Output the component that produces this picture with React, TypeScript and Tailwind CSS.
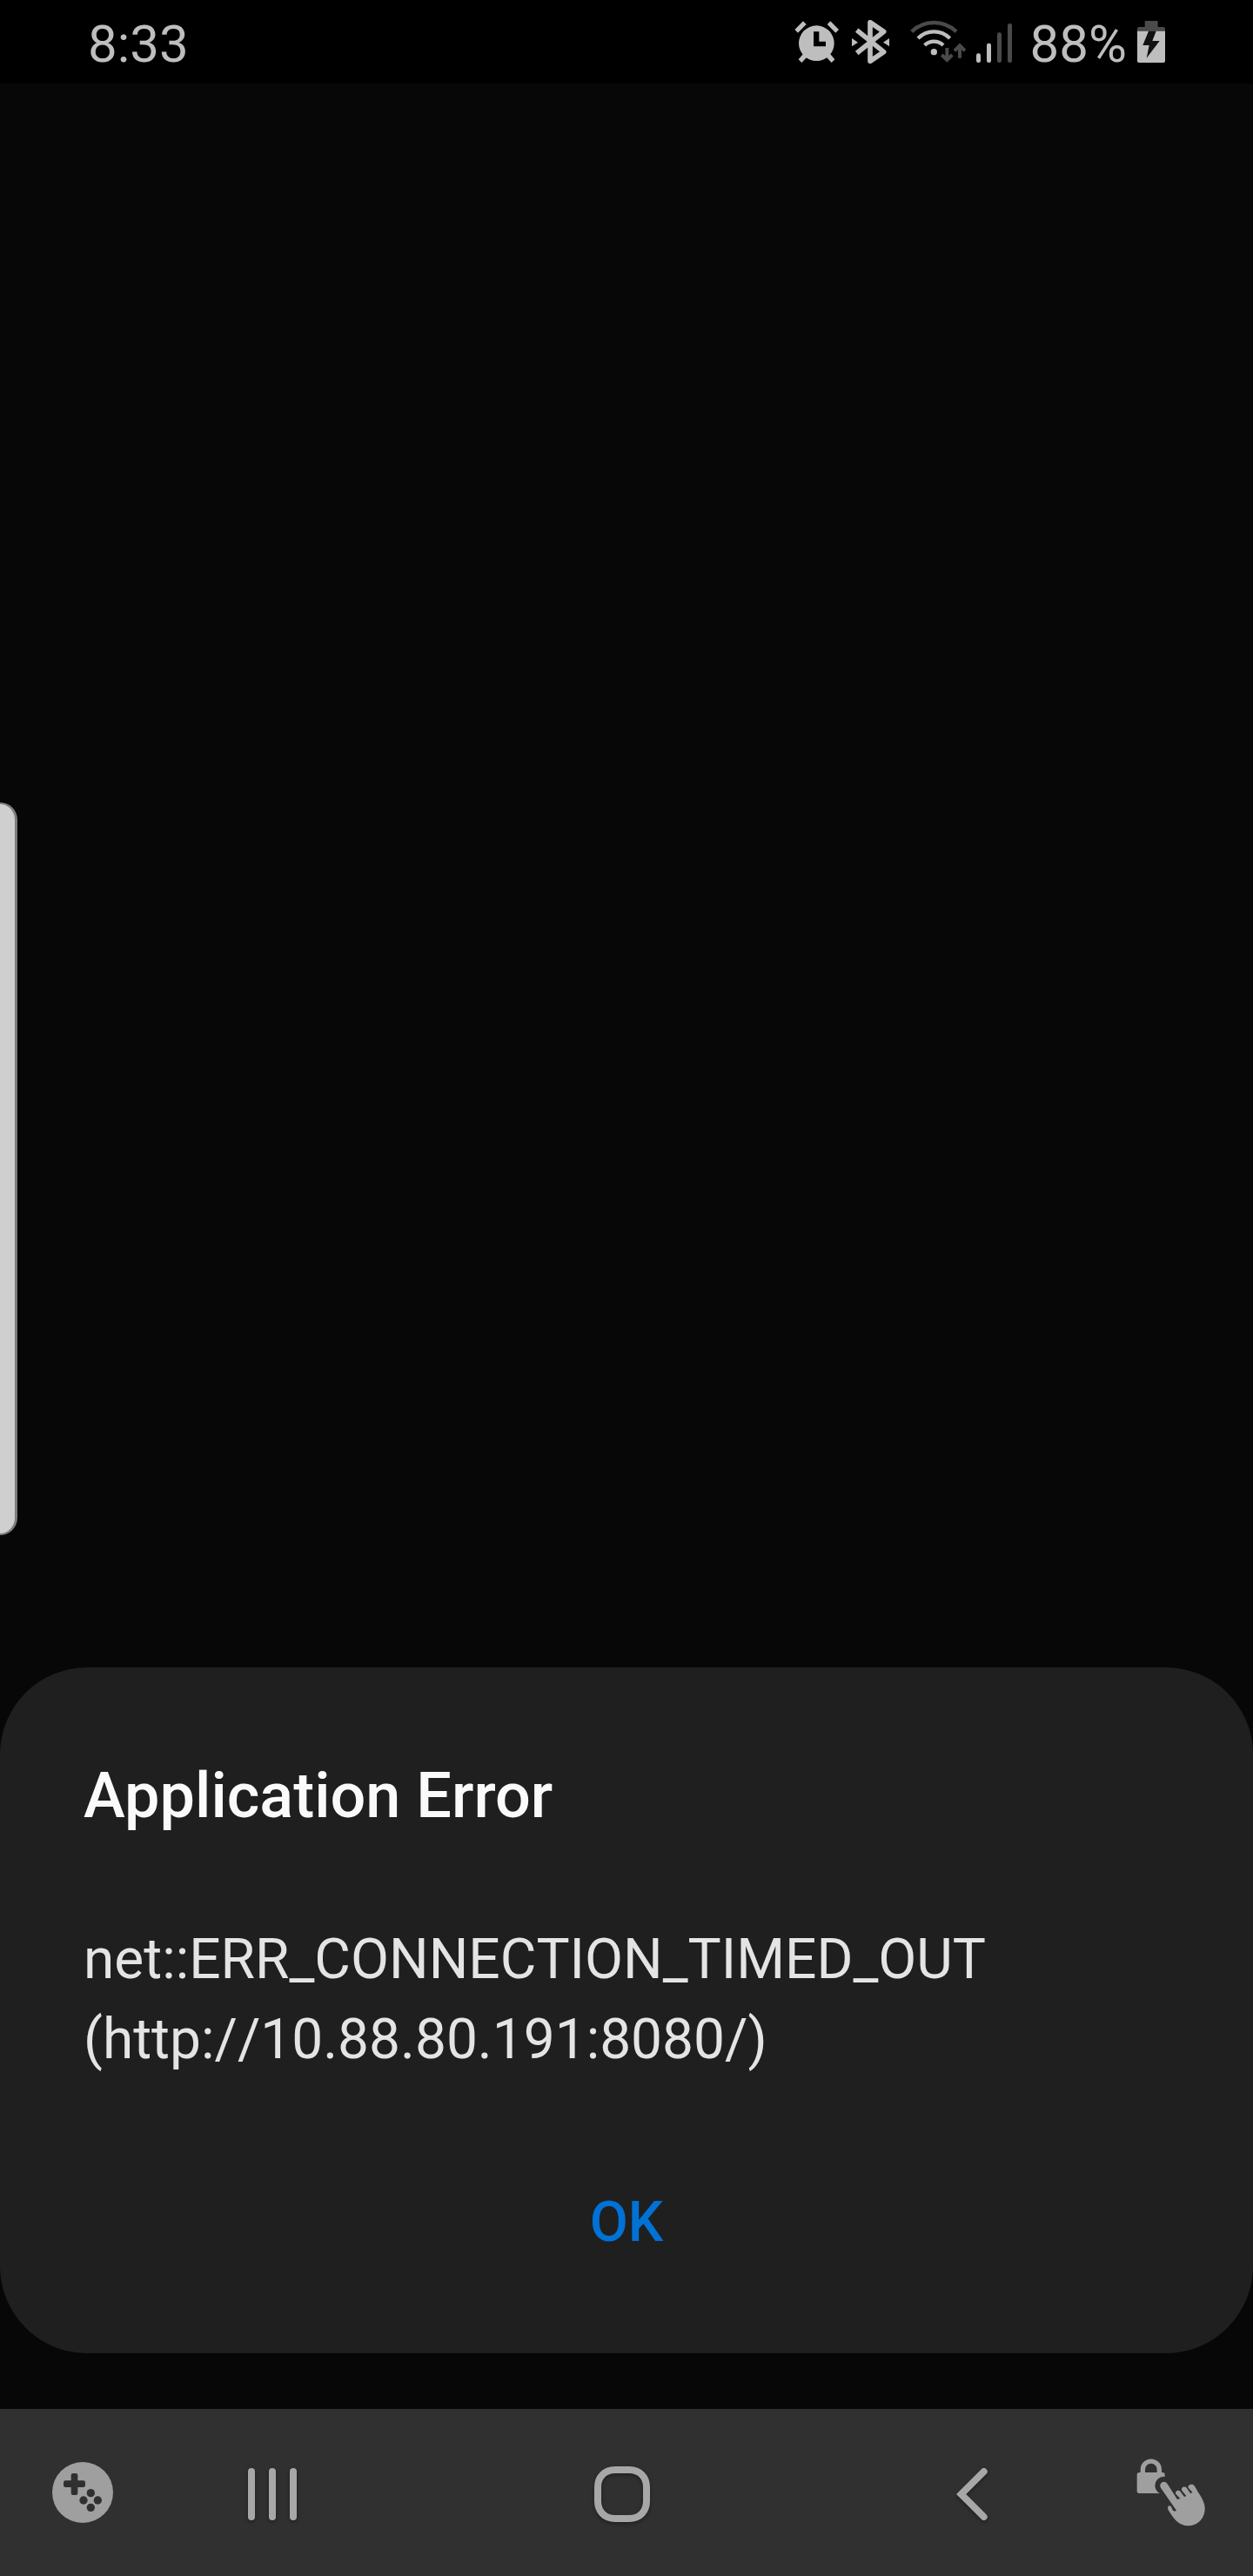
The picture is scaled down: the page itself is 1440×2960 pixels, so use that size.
import React from "react";

function AlarmIcon() {
  return (
    <svg aria-hidden="true" viewBox="33 69 153 150" className="h-[50px] w-[51px]" fill="#bebebe">
      <circle cx="109" cy="149" r="61" />
      <path d="M34 102L63 73L74 84L45 113ZM146 84L157 73L186 102L175 113ZM47 205L58 216L80 193L67 181ZM172 205L161 216L139 193L152 181Z" />
      <path d="M99 109H118V143H141V160H99Z" fill="#000" />
    </svg>
  );
}

function BluetoothIcon() {
  return (
    <svg aria-hidden="true" viewBox="228 69 138 150" className="h-[50px] w-[46px]">
      <path d="M248 183L341 109L294 77V211L341 179L248 104" fill="none" stroke="#bebebe" strokeWidth="17" strokeLinejoin="round" />
      <path d="M231 132L252 146L231 160ZM360 132L339 146L360 160Z" fill="#bebebe" />
    </svg>
  );
}

function WifiIcon() {
  return (
    <svg aria-hidden="true" viewBox="432 69 192 150" className="h-[50px] w-[64px]" fill="none" strokeWidth="13">
      <path d="M437 109A111 111 0 0 1 591 109" stroke="#4a4a4a" />
      <path d="M459 132A77 77 0 0 1 569 132M482 156A46 46 0 0 1 546 156" stroke="#bebebe" />
      <circle cx="514" cy="179" r="11" fill="#bebebe" />
      <path d="M559 165V204M541 189L559 207L577 189M603 200V162M585 175L603 157L621 175" stroke="#4a4a4a" strokeWidth="12" />
    </svg>
  );
}

function SignalIcon() {
  return (
    <svg aria-hidden="true" viewBox="63 69 126 150" className="h-[50px] w-[42px]">
      <rect x="63" y="184" width="15" height="32" rx="7" fill="#bebebe" />
      <rect x="99" y="149" width="15" height="67" rx="7" fill="#bebebe" />
      <rect x="135" y="112" width="15" height="104" rx="7" fill="#4a4a4a" />
      <rect x="171" y="81" width="15" height="135" rx="7" fill="#4a4a4a" />
    </svg>
  );
}

function BatteryIcon() {
  return (
    <svg aria-hidden="true" viewBox="621 69 96 150" className="h-[50px] w-8">
      <path d="M647 75Q647 72 650 72H689Q692 72 692 75V93H711Q717 93 717 99V107H621V99Q621 93 627 93H647Z" fill="#4a4a4a" />
      <path d="M621 107H717V210Q717 216 711 216H627Q621 216 621 210Z" fill="#bebebe" />
      <path d="M660 107H686L673 141H698L653 200L662 156H640Z" fill="#111" />
    </svg>
  );
}

function GameIcon() {
  return (
    <svg aria-hidden="true" viewBox="179 207 210 210" className="size-[70px]">
      <circle cx="284" cy="312" r="105" fill="#9f9f9f" />
      <g fill="#303030">
        <rect x="218" y="271" width="75" height="23" rx="7" />
        <rect x="244" y="246" width="23" height="75" rx="7" />
        <circle cx="312" cy="314" r="14" />
        <circle cx="287" cy="339" r="14" />
        <circle cx="336" cy="339" r="14" />
        <circle cx="312" cy="364" r="14" />
      </g>
    </svg>
  );
}

function TouchLockIcon() {
  return (
    <svg aria-hidden="true" viewBox="738 195 240 234" className="h-[78px] w-20" fill="#9f9f9f">
      <path d="M760 245V233A28 28 0 0 1 817 233V245" fill="none" stroke="#9f9f9f" strokeWidth="16" />
      <rect x="740" y="243" width="96" height="72" rx="8" />
      <circle cx="833" cy="288" r="31" fill="#303030" />
      <path d="M822 296C816 284 824 275 833 275C839 275 843 279 846 284L879 336L889 333L874 317C870 309 880 302 888 307L903 327L910 324L895 306C890 296 902 289 910 295L925 316L931 311L917 296C914 287 927 282 934 286C940 289 943 299 950 310C960 325 973 345 974 365C975 400 950 427 915 427C888 427 869 406 858 388C850 375 841 367 850 358C856 356 858 360 862 370C864 376 868 379 876 374Z" />
    </svg>
  );
}

const navButton = "flex h-full w-[184px] items-center justify-center drop-shadow-[0_2px_2px_rgba(0,0,0,0.35)]";

export default function App() {
  return (
    <div className="relative flex min-h-screen flex-col bg-[#070707] font-['Roboto',sans-serif]">
      <header className="flex h-24 items-center justify-between bg-black px-[101px] text-[60px] leading-none text-[#bebebe]">
        <time className="pt-1.5">8:33</time>
        <div className="flex items-center">
          <AlarmIcon />
          <span className="ml-3.5 flex"><BluetoothIcon /></span>
          <span className="ml-[22px] flex"><WifiIcon /></span>
          <span className="ml-3 flex"><SignalIcon /></span>
          <span className="ml-5 pt-1.5">88%</span>
          <span className="ml-3 flex"><BatteryIcon /></span>
        </div>
      </header>

      <div className="absolute top-[922px] left-0 h-[842px] w-5 rounded-r-[20px] border-y-2 border-r-3 border-[#7c7c7c] bg-[#cfcfcf]" />

      <main className="flex flex-1 flex-col justify-end pb-16">
        <section role="alertdialog" aria-labelledby="error-title" aria-describedby="error-message" className="flex flex-col rounded-[100px] bg-[#1f1f1f] px-24 pt-[104px] pb-[88px]">
          <h1 id="error-title" className="text-[72px] leading-[88px] font-medium text-[#fafafa]">Application Error</h1>
          <p id="error-message" className="mt-[98px] text-[64px] leading-[92px] text-[#e4e4e4] [font-kerning:none]">
            net::ERR_CONNECTION_TIMED_OUT
            <br />
            (http://10.88.80.191:8080/)
          </p>
          <button type="button" className="mt-[102px] h-[124px] w-full text-[64px] font-medium text-[#0072d5]">OK</button>
        </section>
      </main>

      <nav aria-label="System navigation" className="flex h-48 items-center bg-[#303030]">
        <button type="button" aria-label="Game tools" className="flex h-full w-[189px] items-center justify-center">
          <GameIcon />
        </button>
        <div className="flex h-full flex-1 justify-between px-8 pt-1">
          <button type="button" aria-label="Recent apps" className={navButton}>
            <svg aria-hidden="true" viewBox="0 0 56 60" className="h-[60px] w-14" fill="#a7a7a7">
              <rect width="8" height="60" rx="4" />
              <rect x="24" width="8" height="60" rx="4" />
              <rect x="48" width="8" height="60" rx="4" />
            </svg>
          </button>
          <button type="button" aria-label="Home" className={navButton}>
            <svg aria-hidden="true" viewBox="129 222 192 192" className="size-16" fill="none">
              <path d="M201 234H249C287 234 309 260 309 294V342C309 376 287 402 249 402H201C163 402 141 376 141 342V294C141 260 163 234 201 234Z" stroke="#a7a7a7" strokeWidth="24" />
            </svg>
          </button>
          <button type="button" aria-label="Back" className={navButton}>
            <svg aria-hidden="true" viewBox="117 228 108 180" className="h-[60px] w-9" fill="none">
              <path d="M212 240L134 318L212 396" stroke="#a7a7a7" strokeWidth="24" strokeLinecap="round" />
            </svg>
          </button>
        </div>
        <button type="button" aria-label="Touch lock" className="flex h-full w-[199px] items-center justify-center pl-2.5">
          <TouchLockIcon />
        </button>
      </nav>
    </div>
  );
}
